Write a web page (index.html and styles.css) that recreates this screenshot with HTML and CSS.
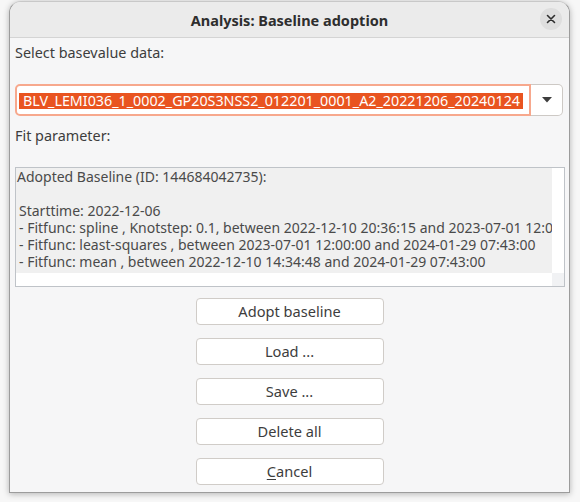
FILE: index.html
```html
<!DOCTYPE html>
<html>
<head>
<meta charset="utf-8">
<link rel="stylesheet" href="styles.css">
</head>
<body>
<div class="window">
  <header class="titlebar">
    <span class="title">Analysis: Baseline adoption</span>
    <span class="close">
      <svg width="10" height="10" viewBox="0 0 10 10"><path d="M1.5 1.5 L8.5 8.5 M8.5 1.5 L1.5 8.5" stroke="#2e2e2e" stroke-width="1.6" stroke-linecap="round"/></svg>
    </span>
  </header>
  <main class="content">
    <div class="label label-top">Select basevalue data:</div>
    <div class="combo">
      <div class="entry"><span class="sel">BLV_LEMI036_1_0002_GP20S3NSS2_012201_0001_A2_20221206_20240124</span></div>
      <div class="drop"><svg width="10" height="6" viewBox="0 0 10 6"><path d="M0 0 H10 L5 5.5 Z" fill="#3d3d3d"/></svg></div>
    </div>
    <div class="label label-fit">Fit parameter:</div>
    <div class="textview">
      <div class="tv-text"><div class="line">Adopted Baseline (ID: 144684042735):</div><div class="line"></div><div class="line ind">Starttime: 2022-12-06</div><div class="line ind">- Fitfunc: spline , Knotstep: 0.1, between 2022-12-10 20:36:15 and 2023-07-01 12:0</div><div class="line ind">- Fitfunc: least-squares , between 2023-07-01 12:00:00 and 2024-01-29 07:43:00</div><div class="line ind">- Fitfunc: mean , between 2022-12-10 14:34:48 and 2024-01-29 07:43:00</div></div>
      <div class="tv-vs"></div>
      <div class="tv-hs"></div>
      <div class="tv-corner"></div>
    </div>
    <div class="buttons">
      <button class="btn">Adopt baseline</button>
      <button class="btn">Load ...</button>
      <button class="btn">Save ...</button>
      <button class="btn">Delete all</button>
      <button class="btn"><u>C</u>ancel</button>
    </div>
  </main>
</div>
</body>
</html>
```
FILE: styles.css
```css
html, body {
  margin: 0;
  padding: 0;
}
body {
  width: 580px;
  height: 502px;
  background: #f7f7f7;
  font-family: "Noto Sans", "Open Sans", sans-serif;
  font-size: 14.4px;
  color: #3d3d3d;
  overflow: hidden;
}
.window {
  box-sizing: border-box;
  margin: 1px 0 0 9px;
  width: 561px;
  height: 492px;
  border: 1px solid #9c9c9c;
  border-top-color: #c8c8c8;
  border-radius: 12px 12px 0 0;
  background: #f6f6f7;
  box-shadow: 0 1px 6px rgba(0, 0, 0, 0.28);
  overflow: hidden;
  display: flex;
  flex-direction: column;
}
.titlebar {
  box-sizing: border-box;
  height: 36px;
  flex: none;
  background: #ebebeb;
  border-bottom: 1px solid #d4d4d4;
  display: flex;
  align-items: center;
  justify-content: center;
  position: relative;
}
.title {
  font-weight: bold;
  font-size: 14.5px;
  color: #2e2e2e;
  margin-top: 1px;
}
.close {
  position: absolute;
  right: 7px;
  top: 6px;
  width: 22px;
  height: 22px;
  border-radius: 50%;
  background: #dedede;
  display: flex;
  align-items: center;
  justify-content: center;
}
.content {
  padding: 6px 4px 0 5px;
  display: flex;
  flex-direction: column;
}
.label {
  line-height: 17px;
  height: 17px;
  color: #3d3d3d;
}
.label-top {
  margin-bottom: 23px;
}
.combo {
  display: flex;
  width: 548px;
  height: 32px;
  box-sizing: border-box;
  margin-bottom: 11px;
}
.entry {
  box-sizing: border-box;
  flex: 1;
  height: 32px;
  border: 2px solid #f7a88d;
  border-radius: 5px 0 0 5px;
  background: #ffffff;
  padding: 5px 0 0 2px;
  overflow: hidden;
}
.sel {
  display: inline-block;
  background: #e95420;
  color: #ffffff;
  line-height: 16px;
  height: 16px;
  padding: 0 3px 0 4px;
  white-space: nowrap;
  font-size: 14.3px;
}
.drop {
  box-sizing: border-box;
  width: 32px;
  height: 32px;
  border: 1px solid #cdc9c5;
  border-left: none;
  border-radius: 0 5px 5px 0;
  background: #ffffff;
  display: flex;
  align-items: center;
  justify-content: center;
}
.label-fit {
  margin-bottom: 23px;
}
.textview {
  box-sizing: border-box;
  width: 550px;
  height: 120px;
  border: 1px solid #bfc3c8;
  display: grid;
  grid-template-columns: 1fr 12px;
  grid-template-rows: 105px 13px;
  margin-bottom: 11px;
  background: #ffffff;
}
.tv-text {
  background: #f0f0f0;
  overflow: hidden;
  white-space: pre;
  padding-left: 1px;
  color: #4a4a4a;
  font-size: 14px;
}
.line {
  line-height: 17px;
  height: 17px;
}
.ind {
  padding-left: 2px;
}
.tv-vs, .tv-hs {
  background: #ffffff;
}
.tv-corner {
  background: #f1f2f4;
}
.buttons {
  display: flex;
  flex-direction: column;
  align-items: center;
  gap: 13px;
  margin-left: -1px;
}
.btn {
  box-sizing: border-box;
  width: 188px;
  height: 27px;
  border: 1px solid #d0ccc8;
  border-radius: 4px;
  background: #ffffff;
  font-family: "Noto Sans", "Open Sans", sans-serif;
  font-size: 14.6px;
  color: #3d3d3d;
  padding: 0 0 2px 0;
}
.btn u {
  text-decoration-thickness: 1px;
  text-underline-offset: 2px;
}
```
